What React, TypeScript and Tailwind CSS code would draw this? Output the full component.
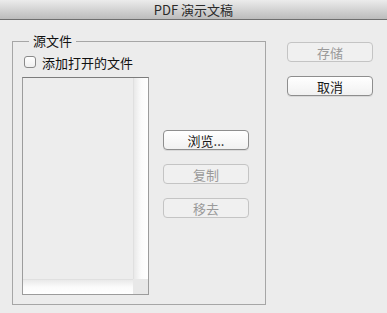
import React from "react";

const font = { fontFamily: '"Noto Sans CJK SC", "Noto Sans", sans-serif' };

function Btn({ label, disabled }: { label: string; disabled?: boolean }) {
  return (
    <div
      className={
        "h-[20px] w-[86px] rounded-[4px] border flex items-center justify-center text-[13px] leading-none " +
        (disabled
          ? "border-[#c4c4c4] bg-[#f0f0f0] text-[#9a9a9a]"
          : "border-[#8e8e8e] bg-gradient-to-b from-[#ffffff] to-[#f1f1f1] text-[#1a1a1a] shadow-[0_1px_0_rgba(0,0,0,0.08)]")
      }
    >
      {label}
    </div>
  );
}

export default function App() {
  return (
    <div className="w-[387px] h-[313px] bg-[#ececec] overflow-hidden" style={font}>
      <div className="h-[20px] border-b border-[#6f6f6f] bg-gradient-to-b from-[#ececec] to-[#bcbcbc] flex items-center justify-center text-[13px] text-[#2a2a2a]">
        PDF 演示文稿
      </div>
      <div className="flex pt-[14px]">
        <fieldset className="ml-[12px] w-[254px] h-[271px] border border-[#a6a6a6] px-0 pb-0">
          <legend className="ml-[16px] px-[4px] text-[13px] leading-[14px] text-[#111]">源文件</legend>
          <div className="flex items-center pl-[11px] mt-[7px] h-[14px]">
            <div className="w-[12px] h-[12px] rounded-[3px] border border-[#8a8a8a] bg-gradient-to-b from-[#ffffff] to-[#f0f0f0]" />
            <span className="ml-[6px] text-[13px] leading-none text-[#111]">添加打开的文件</span>
          </div>
          <div className="flex mt-[8px]">
            <div className="ml-[9px] w-[127px] h-[218px] border border-[#9c9c9c] border-t-[#7c7c7c] flex flex-col bg-[#ededed]">
              <div className="flex flex-1">
                <div className="flex-1" />
                <div className="w-[15px] bg-gradient-to-r from-[#e9e9e9] via-[#fbfbfb] to-[#ffffff] border-l border-[#e0e0e0]" />
              </div>
              <div className="flex h-[15px]">
                <div className="flex-1 bg-gradient-to-b from-[#e9e9e9] via-[#fbfbfb] to-[#ffffff] border-t border-[#e0e0e0]" />
                <div className="w-[15px] bg-[#e8e8e8]" />
              </div>
            </div>
            <div className="ml-[14px] mt-[53px] flex flex-col gap-[14px]">
              <Btn label="浏览..." />
              <Btn label="复制" disabled />
              <Btn label="移去" disabled />
            </div>
          </div>
        </fieldset>
        <div className="ml-[21px] mt-[8px] flex flex-col gap-[14px]">
          <Btn label="存储" disabled />
          <Btn label="取消" />
        </div>
      </div>
    </div>
  );
}
